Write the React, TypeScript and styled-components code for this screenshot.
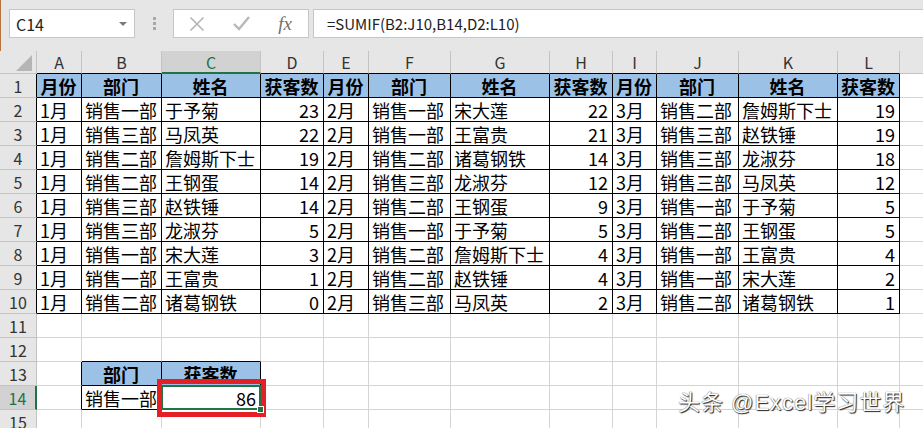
import React from "react";
import styled, { createGlobalStyle } from "styled-components";

const GlobalStyle = createGlobalStyle`
  html, body { margin: 0; padding: 0; background: #fff; }
  body { font-family: "Noto Sans CJK SC", sans-serif; }
  #root { width: 923px; height: 428px; }
`;

const GREEN = "#217346";
const GRID = "#d4d4d4";
const HDR_LINE = "#c3c3c3";
const BLACK = "#000";

const COLS = [37, 45, 80, 99, 63, 45, 82, 99, 63, 44, 82, 99, 62, 64];
const LETTERS = ["", "A", "B", "C", "D", "E", "F", "G", "H", "I", "J", "K", "L", ""];

const HEAD = ["月份", "部门", "姓名", "获客数"];
const B = ["销售一部", "销售三部", "销售二部", "销售二部", "销售三部", "销售三部", "销售一部", "销售一部", "销售二部"];
const C = ["于予菊", "马凤英", "詹姆斯下士", "王钢蛋", "赵铁锤", "龙淑芬", "宋大莲", "王富贵", "诸葛钢铁"];
const D = ["23", "22", "19", "14", "14", "5", "3", "1", "0"];
const F = ["销售一部", "销售一部", "销售二部", "销售三部", "销售二部", "销售一部", "销售二部", "销售二部", "销售三部"];
const G = ["宋大莲", "王富贵", "诸葛钢铁", "龙淑芬", "王钢蛋", "于予菊", "詹姆斯下士", "赵铁锤", "马凤英"];
const H = ["22", "21", "14", "12", "9", "5", "4", "4", "2"];
const J = ["销售二部", "销售三部", "销售三部", "销售三部", "销售一部", "销售二部", "销售一部", "销售一部", "销售二部"];
const K = ["詹姆斯下士", "赵铁锤", "龙淑芬", "马凤英", "于予菊", "王钢蛋", "王富贵", "宋大莲", "诸葛钢铁"];
const L = ["19", "19", "18", "12", "5", "5", "4", "2", "1"];

type Align = "left" | "center" | "right";
type CellData = { text: string; align: Align; bold?: boolean; blue?: boolean };

function cellAt(r: number, c: number): CellData | null {
  if (r === 1 && c >= 1 && c <= 12) {
    return { text: HEAD[(c - 1) % 4], align: "center", bold: true, blue: true };
  }
  if (r >= 2 && r <= 10) {
    const i = r - 2;
    const cols: Record<number, CellData> = {
      1: { text: "1月", align: "left" },
      2: { text: B[i], align: "left" },
      3: { text: C[i], align: "left" },
      4: { text: D[i], align: "right" },
      5: { text: "2月", align: "left" },
      6: { text: F[i], align: "left" },
      7: { text: G[i], align: "left" },
      8: { text: H[i], align: "right" },
      9: { text: "3月", align: "left" },
      10: { text: J[i], align: "left" },
      11: { text: K[i], align: "left" },
      12: { text: L[i], align: "right" },
    };
    return cols[c] ?? null;
  }
  if (r === 13 && c === 2) return { text: "部门", align: "center", bold: true, blue: true };
  if (r === 13 && c === 3) return { text: "获客数", align: "center", bold: true, blue: true };
  if (r === 14 && c === 2) return { text: "销售一部", align: "left" };
  if (r === 14 && c === 3) return { text: "86", align: "right" };
  return null;
}

function inTable(r: number, c: number) {
  return (r >= 1 && r <= 10 && c >= 1 && c <= 12) || (r >= 13 && r <= 14 && c >= 2 && c <= 3);
}

const Page = styled.div`
  position: relative;
  width: 923px;
  height: 428px;
  overflow: hidden;
  background: #fff;
`;

const TopBar = styled.div`
  height: 51px;
  box-sizing: border-box;
  background: #e6e6e6;
  display: flex;
  align-items: flex-start;
  padding: 9px 0 0 8px;
  border-left: 1px solid #b9733f;
`;

const NameBox = styled.div`
  width: 126px;
  height: 29px;
  box-sizing: border-box;
  background: #fff;
  border: 1px solid #c6c6c6;
  display: flex;
  align-items: center;
  justify-content: space-between;
  padding: 0 7px 0 6px;
  font-family: "Noto Sans CJK SC", sans-serif;
  font-size: 16px;
  color: #222;
`;

const DropArrow = styled.span`
  width: 0;
  height: 0;
  border-left: 4px solid transparent;
  border-right: 4px solid transparent;
  border-top: 4px solid #7a7a7a;
`;

const Grip = styled.div`
  width: 38px;
  height: 29px;
  display: flex;
  flex-direction: column;
  align-items: center;
  justify-content: center;
  gap: 2px;
`;

const GripDot = styled.span`
  width: 3px;
  height: 3px;
  background: #a8a8a8;
`;

const FxBox = styled.div`
  width: 136px;
  height: 29px;
  box-sizing: border-box;
  background: #fff;
  border: 1px solid #c6c6c6;
  display: flex;
  align-items: center;
  padding-left: 1px;
`;

const FxSlot = styled.div`
  width: 44px;
  display: flex;
  align-items: center;
  justify-content: center;
`;

const FxText = styled.span`
  font-family: "Liberation Serif", serif;
  font-style: italic;
  font-size: 19px;
  color: #6f6f6f;
  line-height: 1;
`;

const FormulaInput = styled.div`
  flex: 1;
  margin-left: 4px;
  height: 29px;
  box-sizing: border-box;
  background: #fff;
  border: 1px solid #c6c6c6;
  border-right: none;
  display: flex;
  align-items: center;
  padding-left: 13px;
  font-family: "Noto Sans CJK SC", sans-serif;
  font-size: 15px;
  color: #222;
  white-space: nowrap;
`;

const Sheet = styled.div`
  display: grid;
  grid-template-columns: ${COLS.map((w) => `${w}px`).join(" ")};
  grid-template-rows: 23px repeat(15, 24px);
`;

const Corner = styled.div`
  box-sizing: border-box;
  background: #e6e6e6;
  border-right: 1px solid ${HDR_LINE};
  border-bottom: 1px solid ${HDR_LINE};
  display: flex;
  align-items: flex-end;
  justify-content: flex-end;
  padding: 0 4px 2px 0;
`;

const ColHead = styled.div<{ $sel?: boolean; $bottom: string }>`
  box-sizing: border-box;
  background: ${(p) => (p.$sel ? "#d2d2d2" : "#e6e6e6")};
  border-right: 1px solid ${HDR_LINE};
  border-bottom: ${(p) => (p.$sel ? `2px solid ${GREEN}` : `1px solid ${p.$bottom}`)};
  display: flex;
  align-items: center;
  justify-content: center;
  font-family: "Noto Sans CJK SC", sans-serif;
  font-size: 16px;
  line-height: 20px;
  color: ${(p) => (p.$sel ? GREEN : "#333")};
`;

const RowHead = styled.div<{ $sel?: boolean; $right: string }>`
  box-sizing: border-box;
  background: ${(p) => (p.$sel ? "#d2d2d2" : "#e6e6e6")};
  border-bottom: 1px solid ${HDR_LINE};
  border-right: ${(p) => (p.$sel ? `2px solid ${GREEN}` : `1px solid ${p.$right}`)};
  display: flex;
  align-items: center;
  justify-content: center;
  font-family: "Noto Sans CJK SC", sans-serif;
  font-size: 16px;
  line-height: 20px;
  color: ${(p) => (p.$sel ? GREEN : "#333")};
`;

const Cell = styled.div<{
  $right: string;
  $bottom: string;
  $align: Align;
  $bold?: boolean;
  $blue?: boolean;
  $sel?: boolean;
}>`
  position: relative;
  box-sizing: border-box;
  border-right: 1px solid ${(p) => p.$right};
  border-bottom: 1px solid ${(p) => p.$bottom};
  background: ${(p) => (p.$blue ? "#9bc2e6" : "#fff")};
  display: flex;
  align-items: center;
  justify-content: ${(p) =>
    p.$align === "left" ? "flex-start" : p.$align === "right" ? "flex-end" : "center"};
  padding: 0 4px 0 3px;
  font-family: "Noto Sans CJK SC", sans-serif;
  font-size: 18px;
  line-height: 22px;
  font-weight: ${(p) => (p.$bold ? 700 : 400)};
  color: #000;
  white-space: nowrap;

  ${(p) =>
    p.$sel &&
    `
    &::after {
      content: "";
      position: absolute;
      left: -1px;
      top: -1px;
      right: -1px;
      bottom: -1px;
      border: 2px solid ${GREEN};
      pointer-events: none;
    }
    &::before {
      content: "";
      position: absolute;
      right: -4px;
      bottom: -4px;
      width: 5px;
      height: 5px;
      background: ${GREEN};
      border: 1px solid #fff;
      z-index: 2;
    }
  `}
`;

const RedBox = styled.div`
  position: absolute;
  left: 157px;
  top: 379px;
  width: 109px;
  height: 38px;
  box-sizing: border-box;
  border: 5px solid #e41f26;
  pointer-events: none;
`;

const Watermark = styled.div`
  position: absolute;
  left: 678px;
  top: 391px;
  font-family: "Liberation Sans", "Noto Sans CJK SC", sans-serif;
  font-size: 22px;
  line-height: 24px;
  letter-spacing: 1px;
  color: #fff;
  text-shadow: 1px 1px 1px #222, 0 0 1px #333;
  white-space: nowrap;
`;

function CloseIcon() {
  return (
    <svg width="16" height="14" viewBox="0 0 16 14">
      <path d="M1.5 0.5 L14.5 13.5 M14.5 0.5 L1.5 13.5" stroke="#b5b5b5" strokeWidth="1.6" fill="none" />
    </svg>
  );
}

function CheckIcon() {
  return (
    <svg width="17" height="15" viewBox="0 0 17 15">
      <path d="M1 8 L6 13 L16 1" stroke="#b8b8b8" strokeWidth="2.4" fill="none" />
    </svg>
  );
}

function CornerTriangle() {
  return (
    <svg width="16" height="16" viewBox="0 0 16 16">
      <path d="M16 0 L16 16 L0 16 Z" fill="#b5b5b5" />
    </svg>
  );
}

export default function App() {
  const cells: React.ReactNode[] = [];
  for (let r = 0; r <= 15; r++) {
    for (let c = 0; c < COLS.length; c++) {
      const key = `${r}-${c}`;
      if (r === 0 && c === 0) {
        cells.push(
          <Corner key={key}>
            <CornerTriangle />
          </Corner>
        );
      } else if (r === 0) {
        const bottom = inTable(1, c) ? BLACK : HDR_LINE;
        cells.push(
          <ColHead key={key} $sel={c === 3} $bottom={bottom}>
            {LETTERS[c]}
          </ColHead>
        );
      } else if (c === 0) {
        const right = inTable(r, 1) ? BLACK : HDR_LINE;
        cells.push(
          <RowHead key={key} $sel={r === 14} $right={right}>
            {r}
          </RowHead>
        );
      } else {
        const d = cellAt(r, c);
        const right = inTable(r, c) || inTable(r, c + 1) ? BLACK : GRID;
        const bottom = inTable(r, c) || inTable(r + 1, c) ? BLACK : GRID;
        cells.push(
          <Cell
            key={key}
            $right={right}
            $bottom={bottom}
            $align={d?.align ?? "left"}
            $bold={d?.bold}
            $blue={d?.blue}
            $sel={r === 14 && c === 3}
          >
            {d?.text ?? ""}
          </Cell>
        );
      }
    }
  }

  return (
    <Page>
      <GlobalStyle />
      <TopBar>
        <NameBox>
          <span>C14</span>
          <DropArrow />
        </NameBox>
        <Grip>
          <GripDot />
          <GripDot />
          <GripDot />
        </Grip>
        <FxBox>
          <FxSlot>
            <CloseIcon />
          </FxSlot>
          <FxSlot>
            <CheckIcon />
          </FxSlot>
          <FxSlot>
            <FxText>fx</FxText>
          </FxSlot>
        </FxBox>
        <FormulaInput>=SUMIF(B2:J10,B14,D2:L10)</FormulaInput>
      </TopBar>
      <Sheet>{cells}</Sheet>
      <RedBox />
      <Watermark>头条 @Excel学习世界</Watermark>
    </Page>
  );
}
